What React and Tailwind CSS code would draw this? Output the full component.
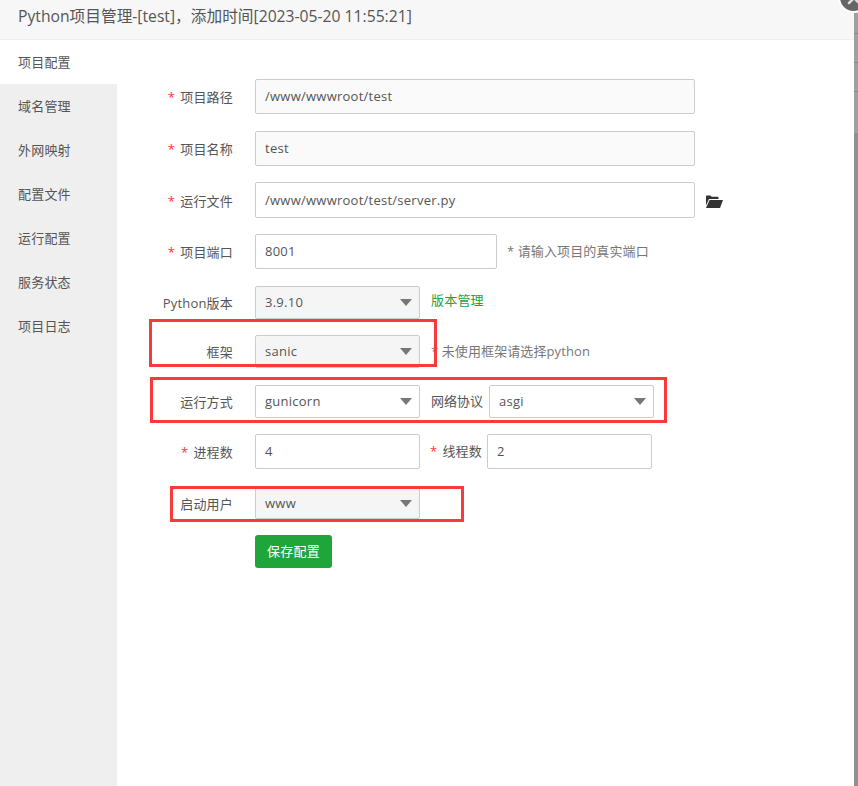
import React from 'react';
import { X } from 'lucide-react';

const tabs = ['项目配置', '域名管理', '外网映射', '配置文件', '运行配置', '服务状态', '项目日志'];

function Label({ text, required }) {
  return (
    <label className="w-[103px] shrink-0 pr-[22px] pt-[1px] text-right text-[13px] leading-[20px] tracking-[0.2px] text-[#555]">
      {required && <span className="mr-[5px] text-[#f33]">*</span>}
      {text}
    </label>
  );
}

function Field({ value, width, muted, height = 'h-[35px]' }) {
  return (
    <div className={`${width} ${height} flex items-center rounded-[2px] border border-[#ccc] px-[9px] pt-[1px] text-[13px] tracking-[0.25px] text-[#555] ${muted ? 'bg-[#fafafa]' : 'bg-white'}`}>
      {value}
    </div>
  );
}

function Select({ value, width, muted, height = 'h-[33px]' }) {
  return (
    <div className={`${width} ${height} flex items-center justify-between rounded-[2px] border border-[#ccc] pl-[9px] pr-[7px] text-[13px] tracking-[0.25px] text-[#555] ${muted ? 'bg-[#f5f5f5]' : 'bg-white'}`}>
      <span>{value}</span>
      <span className="h-0 w-0 border-x-[6px] border-t-[7px] border-x-transparent border-t-[#777]"></span>
    </div>
  );
}

function Mark({ className }) {
  return <div className={`pointer-events-none absolute border-[3px] border-[#fa3a3a] ${className}`}></div>;
}

export default function App() {
  return (
    <div className="relative flex h-[786px] w-[858px] flex-col overflow-hidden bg-white font-['Open_Sans','Noto_Sans_CJK_SC',sans-serif]">
      <div className="flex h-[40px] shrink-0 items-center border-b border-[#eee] bg-[#f7f7f7] pb-[5px] pl-[18px] text-[15.7px] text-[#555]">
        Python项目管理-[test]，添加时间[2023-05-20 11:55:21]
      </div>

      <div className="flex min-h-0 flex-1">
        <div className="w-[117px] shrink-0 bg-[#efefef]">
          {tabs.map((tab, i) => (
            <div key={tab} className={`flex h-[44px] items-center pl-[18px] pt-[1px] text-[13px] tracking-[0.2px] text-[#555] ${i === 0 ? 'bg-white' : ''}`}>
              {tab}
            </div>
          ))}
        </div>

        <div className="flex flex-1 flex-col pl-[35px] pt-[39px]">
          <div className="flex items-center">
            <Label text="项目路径" required />
            <Field value="/www/wwwroot/test" width="w-[440px]" muted />
          </div>

          <div className="mt-[17px] flex items-center">
            <Label text="项目名称" required />
            <Field value="test" width="w-[440px]" muted />
          </div>

          <div className="mt-[16px] flex items-center">
            <Label text="运行文件" required />
            <Field value="/www/wwwroot/test/server.py" width="w-[440px]" height="h-[36px]" />
            <svg className="ml-[10px] mt-[3px] h-[13px] w-[18px]" viewBox="0 0 18 13">
              <path d="M1 10.5V1.6C1 1 1.4.6 2 .6h3.4l1.1 1.2h6c.6 0 1 .4 1 1V4H4L1 10.5z" fill="#333" />
              <path d="M4.6 5H18l-3 8H1L4.6 5z" fill="#333" />
            </svg>
          </div>

          <div className="mt-[16px] flex items-center">
            <Label text="项目端口" required />
            <Field value="8001" width="w-[242px]" />
            <span className="ml-[10px] text-[13px] tracking-[0.1px] text-[#777]">* 请输入项目的真实端口</span>
          </div>

          <div className="mt-[17px] flex items-center">
            <Label text="Python版本" />
            <Select value="3.9.10" width="w-[165px]" muted />
            <a className="mb-[3px] ml-[11px] text-[13px] tracking-[0.2px] text-[#20a53a]">版本管理</a>
          </div>

          <div className="mt-[16px] flex items-center">
            <Label text="框架" />
            <Select value="sanic" width="w-[165px]" muted />
            <span className="ml-[11px] text-[13px] tracking-[0.1px] text-[#777]">* 未使用框架请选择python</span>
          </div>

          <div className="mt-[17px] flex items-center">
            <Label text="运行方式" />
            <Select value="gunicorn" width="w-[165px]" />
            <span className="ml-[11px] w-[58px] text-[13px] text-[#555]">网络协议</span>
            <Select value="asgi" width="w-[165px]" />
          </div>

          <div className="mt-[16px] flex items-center">
            <Label text="进程数" required />
            <Field value="4" width="w-[165px]" />
            <span className="ml-[10px] w-[57px] text-[13px] tracking-[0.2px] text-[#555]"><span className="mr-[5px] text-[#f33]">*</span>线程数</span>
            <Field value="2" width="w-[165px]" />
          </div>

          <div className="mt-[19px] flex items-center">
            <Label text="启动用户" />
            <Select value="www" width="w-[165px]" muted height="h-[31px]" />
          </div>

          <button className="ml-[103px] mt-[16px] h-[33px] w-[77px] rounded-[3px] bg-[#20a53a] text-[13px] tracking-[0.2px] text-white">保存配置</button>
        </div>
      </div>

      <Mark className="left-[149px] top-[319px] h-[48px] w-[288px]" />
      <Mark className="left-[150px] top-[377px] h-[46px] w-[517px]" />
      <Mark className="left-[170px] top-[486px] h-[36px] w-[294px]" />

      <div className="absolute bottom-0 right-0 top-[12px] flex w-[4px] flex-col bg-[#909090]">
        <div className="h-[22px] shrink-0 border-b border-[#888] bg-[#a0a0a0]"></div>
        <div className="h-[29px] shrink-0 border-b border-[#888] bg-[#a0a0a0]"></div>
        <div className="h-[29px] shrink-0 border-b border-[#888] bg-[#a0a0a0]"></div>
        <div className="h-[41px] shrink-0 bg-[#a0a0a0]"></div>
      </div>
      <div className="absolute right-[-9px] top-[-16px] flex h-[27px] w-[27px] items-center justify-center rounded-full bg-[#666] ring-2 ring-white">
        <X className="h-[20px] w-[20px] text-[#ddd]" strokeWidth={3} />
      </div>
    </div>
  );
}
